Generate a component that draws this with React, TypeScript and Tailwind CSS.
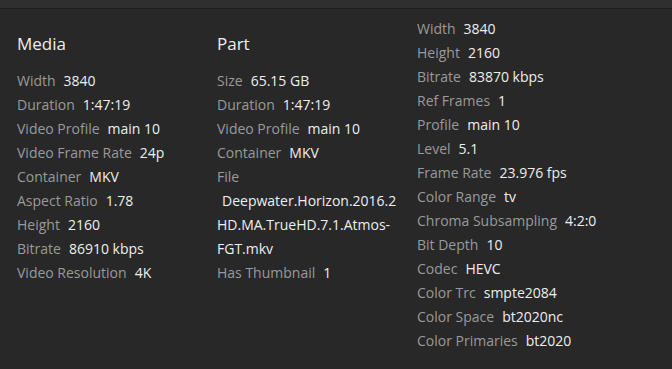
import React from 'react'

type Row = [string, React.ReactNode]

const media: Row[] = [
  ['Width', '3840'],
  ['Duration', '1:47:19'],
  ['Video Profile', 'main 10'],
  ['Video Frame Rate', '24p'],
  ['Container', 'MKV'],
  ['Aspect Ratio', '1.78'],
  ['Height', '2160'],
  ['Bitrate', '86910 kbps'],
  ['Video Resolution', '4K'],
]

const part: Row[] = [
  ['Size', '65.15 GB'],
  ['Duration', '1:47:19'],
  ['Video Profile', 'main 10'],
  ['Container', 'MKV'],
]

const stream: Row[] = [
  ['Width', '3840'],
  ['Height', '2160'],
  ['Bitrate', '83870 kbps'],
  ['Ref Frames', '1'],
  ['Profile', 'main 10'],
  ['Level', '5.1'],
  ['Frame Rate', '23.976 fps'],
  ['Color Range', 'tv'],
  ['Chroma Subsampling', '4:2:0'],
  ['Bit Depth', '10'],
  ['Codec', 'HEVC'],
  ['Color Trc', 'smpte2084'],
  ['Color Space', 'bt2020nc'],
  ['Color Primaries', 'bt2020'],
]

const Item = ({ label, value }: { label: string; value: React.ReactNode }) => (
  <div className="leading-6">
    <span className="text-[#9a9a9a]">{label}</span>
    <span className="ml-2 text-[#eeeeee]">{value}</span>
  </div>
)

const Column = ({ title, rows, children }: { title?: string; rows: Row[]; children?: React.ReactNode }) => (
  <div className="w-[200px] pr-4">
    {title && <h3 className="mt-[15px] mb-[13px] text-[17px] leading-6 text-[#eeeeee]">{title}</h3>}
    {rows.map(([l, v], i) => (
      <Item key={i} label={l} value={v} />
    ))}
    {children}
  </div>
)

export default function App() {
  return (
    <div
      className="h-[369px] w-[672px] overflow-hidden bg-[#282828] text-[14px]"
      style={{ fontFamily: '"Open Sans", sans-serif' }}
    >
      <div className="h-[9px] border-b border-[#1e1e1e] bg-[#2f2f2f]" />
      <div className="flex pl-[17px] pt-[8px]">
        <Column title="Media" rows={media} />
        <Column title="Part" rows={part}>
          <div className="leading-6 text-[#9a9a9a]">File</div>
          <div className="leading-6 text-[#eeeeee]">
            <span className="pl-[5px]">Deepwater.Horizon.2016.2</span>
            <br />
            HD.MA.TrueHD.7.1.Atmos-
            <br />
            FGT.mkv
          </div>
          <Item label="Has Thumbnail" value="1" />
        </Column>
        <Column rows={stream} />
      </div>
    </div>
  )
}
